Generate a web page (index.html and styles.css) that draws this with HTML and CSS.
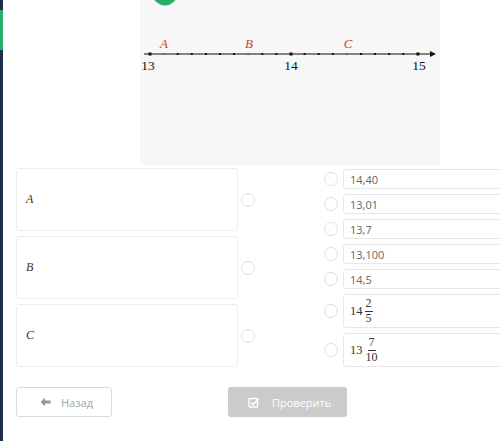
FILE: index.html
```html
<!DOCTYPE html>
<html lang="ru">
<head>
<meta charset="utf-8">
<title>Задание</title>
<link rel="stylesheet" href="styles.css">
</head>
<body>
<div class="app">
  <aside class="rail"><div class="rail-mark"></div></aside>
  <main class="main">
    <section class="figure-row">
      <div class="figure">
        <svg class="numline" width="300" height="165" viewBox="0 0 300 165">
          <circle cx="25" cy="-7" r="12.5" fill="#27ae68"/>
          <line x1="4" y1="54" x2="292" y2="54" stroke="#111" stroke-width="1.2"/>
          <path d="M290 51 L296 54 L290 57 Z" fill="#111"/>
          <g fill="#111">
            <rect x="8.5" y="52.5" width="3" height="3"/>
            <rect x="22.6" y="53" width="2" height="2" fill="#d03a34"/>
            <rect x="36.7" y="53" width="2" height="2"/>
            <rect x="50.8" y="53" width="2" height="2"/>
            <rect x="64.9" y="53" width="2" height="2"/>
            <rect x="79" y="53" width="2" height="2"/>
            <rect x="93.1" y="53" width="2" height="2"/>
            <rect x="107.2" y="53" width="2" height="2" fill="#d03a34"/>
            <rect x="121.3" y="53" width="2" height="2"/>
            <rect x="135.4" y="53" width="2" height="2"/>
            <rect x="149.5" y="52.5" width="3" height="3"/>
            <rect x="163.6" y="53" width="2" height="2"/>
            <rect x="177.7" y="53" width="2" height="2"/>
            <rect x="191.8" y="53" width="2" height="2"/>
            <rect x="205.9" y="53" width="2" height="2" fill="#d03a34"/>
            <rect x="220" y="53" width="2" height="2"/>
            <rect x="234.1" y="53" width="2" height="2"/>
            <rect x="248.2" y="53" width="2" height="2"/>
            <rect x="262.3" y="53" width="2" height="2"/>
            <rect x="276.4" y="52.5" width="3" height="3"/>
          </g>
          <g class="pt-label">
            <text x="24" y="48">A</text>
            <text x="109" y="48">B</text>
            <text x="208" y="48">C</text>
          </g>
          <g class="num-label">
            <text x="8" y="70">13</text>
            <text x="151" y="70">14</text>
            <text x="279" y="70">15</text>
          </g>
        </svg>
      </div>
    </section>

    <section class="match">
      <div class="left-col">
        <div class="pair">
          <div class="card"><span class="var">A</span></div>
          <span class="radio"></span>
        </div>
        <div class="pair">
          <div class="card"><span class="var">B</span></div>
          <span class="radio"></span>
        </div>
        <div class="pair">
          <div class="card"><span class="var">C</span></div>
          <span class="radio"></span>
        </div>
      </div>
      <div class="right-col">
        <div class="opt"><span class="radio"></span><div class="box">14,40</div></div>
        <div class="opt"><span class="radio"></span><div class="box">13,01</div></div>
        <div class="opt"><span class="radio"></span><div class="box">13,7</div></div>
        <div class="opt"><span class="radio"></span><div class="box">13,100</div></div>
        <div class="opt"><span class="radio"></span><div class="box">14,5</div></div>
        <div class="opt"><span class="radio"></span><div class="box tall"><span class="mixed">14<span class="frac"><span class="num">2</span><span class="den">5</span></span></span></div></div>
        <div class="opt"><span class="radio"></span><div class="box tall"><span class="mixed">13<span class="frac"><span class="num">7</span><span class="den">10</span></span></span></div></div>
      </div>
    </section>

    <section class="actions">
      <button class="btn btn-back">
        <svg class="ico" width="11" height="10" viewBox="0 0 11 10"><path d="M0.5 5 L5 0.8 L5 3.4 L10.5 3.4 L10.5 6.6 L5 6.6 L5 9.2 Z" fill="#8a9aa8"/></svg>
        <span>Назад</span>
      </button>
      <button class="btn btn-check">
        <svg class="ico" width="11" height="11" viewBox="0 0 11 11"><rect x="1" y="1.5" width="8.5" height="8.5" rx="1" fill="none" stroke="#fff" stroke-width="1.4"/><path d="M3 5.5 L5 7.5 L10.5 1.5" fill="none" stroke="#fff" stroke-width="1.6"/></svg>
        <span>Проверить</span>
      </button>
    </section>
  </main>
</div>
</body>
</html>
```

FILE: styles.css
```css
html, body {
  margin: 0;
  padding: 0;
  background: #ffffff;
  overflow: hidden;
}
body {
  width: 500px;
  height: 441px;
  font-family: "Open Sans", "Liberation Sans", sans-serif;
}
.app {
  display: flex;
  height: 441px;
}
.rail {
  width: 3px;
  flex: none;
  background: #1e2f4c;
  padding-top: 10px;
  box-sizing: border-box;
}
.rail-mark {
  height: 40px;
  background: #2bb06c;
}
.main {
  flex: 1;
  min-width: 0;
  padding-left: 13px;
}
.figure-row {
  display: flex;
  padding-left: 124px;
  height: 165px;
}
.figure {
  width: 300px;
  height: 165px;
  background: #f7f7f7;
}
.numline {
  display: block;
  overflow: visible;
}
.pt-label text {
  font-family: "Liberation Serif", "DejaVu Serif", serif;
  font-style: italic;
  font-size: 13px;
  fill: #d03a34;
  text-anchor: middle;
}
.num-label text {
  font-family: "Liberation Serif", "DejaVu Serif", serif;
  font-size: 13.5px;
  fill: #111;
  text-anchor: middle;
}

.match {
  display: flex;
  margin-top: 3px;
  height: 198px;
}
.left-col {
  display: flex;
  flex-direction: column;
  gap: 5px;
}
.pair {
  display: flex;
  align-items: center;
}
.card {
  width: 222px;
  height: 63px;
  box-sizing: border-box;
  border: 1px solid #ededed;
  border-radius: 3px;
  display: flex;
  align-items: center;
  padding-left: 9px;
}
.var {
  font-family: "Liberation Serif", "DejaVu Serif", serif;
  font-style: italic;
  font-size: 12px;
  color: #333;
}
.radio {
  display: block;
  width: 14px;
  height: 14px;
  box-sizing: border-box;
  border: 1.5px solid #dedede;
  border-radius: 50%;
  background: #fff;
  flex: none;
}
.pair .radio {
  margin-left: 3px;
}
.right-col {
  display: flex;
  flex-direction: column;
  gap: 5px;
  margin-left: 69px;
  padding-top: 1px;
}
.opt {
  display: flex;
  align-items: center;
  gap: 5px;
}
.box {
  width: 180px;
  height: 20px;
  box-sizing: border-box;
  border: 1px solid #e8e8e8;
  border-radius: 3px;
  display: flex;
  align-items: center;
  padding-left: 6px;
  font-size: 11px;
  color: #666;
}
.box.tall {
  height: 34px;
}
.mixed {
  display: flex;
  align-items: center;
  font-family: "Liberation Serif", "DejaVu Serif", serif;
  font-size: 12.5px;
  color: #333;
}
.frac {
  display: inline-flex;
  flex-direction: column;
  align-items: center;
  margin-left: 2px;
  font-size: 12px;
  line-height: 13px;
}
.frac .num {
  border-bottom: 1px solid #333;
  padding: 0 1px 1px;
}
.frac .den {
  padding: 0 1px;
}

.actions {
  display: flex;
  align-items: center;
  margin-top: 21px;
}
.btn {
  display: flex;
  align-items: center;
  height: 30px;
  box-sizing: border-box;
  border-radius: 3px;
  font-family: "Open Sans", "Liberation Sans", sans-serif;
  font-size: 11px;
  padding: 0;
}
.btn-back {
  width: 96px;
  background: #fff;
  border: 1px solid #dadada;
  color: #9aa4ae;
  padding-left: 23px;
  gap: 10px;
}
.btn-check {
  width: 119px;
  margin-left: 116px;
  background: #cbcbcb;
  border: none;
  color: #fff;
  padding-left: 20px;
  gap: 13px;
}
.ico {
  display: block;
  flex: none;
}
```
